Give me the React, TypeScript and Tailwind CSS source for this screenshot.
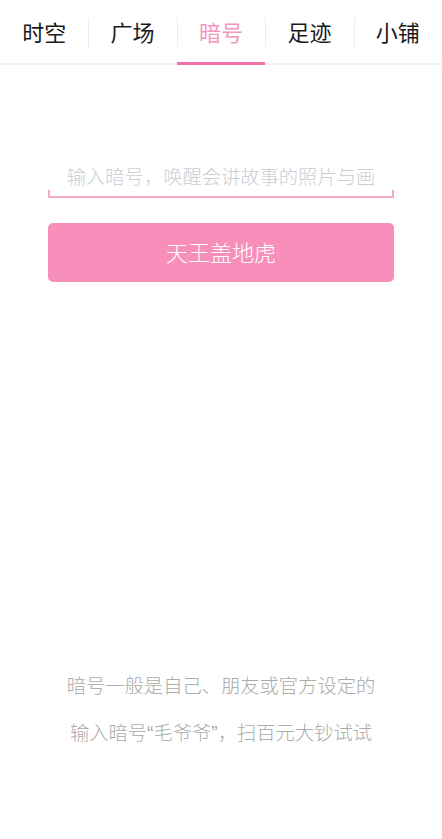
import React from "react";

const tabs = ["时空", "广场", "暗号", "足迹", "小铺"];

export default function App() {
  return (
    <div
      className="w-[442px] h-[839px] bg-white flex flex-col font-light"
      style={{ fontFamily: '"Noto Sans CJK SC", "Noto Sans", sans-serif' }}
    >
      <div className="h-[65px] flex border-b-2 border-[#f2f2f5]">
        {tabs.map((t, i) => (
          <div key={t} className="flex-1 relative flex items-center justify-center">
            {i > 0 && (
              <div className="absolute left-0 top-[18px] h-[29px] w-[1px] bg-[#ececec]" />
            )}
            <span
              className={`text-[22px] leading-none -mt-[2px] font-normal ${
                i === 2 ? "text-[#f597bd]" : "text-[#1a1a1a]"
              }`}
            >
              {t}
            </span>
            {i === 2 && (
              <div className="absolute left-0 right-0 bottom-[-2px] h-[3px] bg-[#f472aa]" />
            )}
          </div>
        ))}
      </div>

      <div className="px-[48px] pt-[92px]">
        <div className="relative h-[41px] border-b-2 border-[#f8a8c9] flex items-center justify-center">
          <div className="absolute left-0 bottom-0 w-[2px] h-[6px] bg-[#f8a8c9]" />
          <div className="absolute right-0 bottom-0 w-[2px] h-[6px] bg-[#f8a8c9]" />
          <span className="text-[19.3px] leading-none text-[#cdcdd2] whitespace-nowrap">
            输入暗号，唤醒会讲故事的照片与画
          </span>
        </div>
        <button className="mt-[25px] w-full h-[59px] rounded-[5px] bg-[#f78fba] text-white text-[22px] flex items-center justify-center pb-[3px]">
          天王盖地虎
        </button>
      </div>

      <div className="mt-[394px] flex flex-col items-center text-[19.3px] text-[#ababab] leading-none">
        <div>暗号一般是自己、朋友或官方设定的</div>
        <div className="mt-[28px]">
          输入暗号<span style={{ fontFamily: '"Liberation Sans", sans-serif' }}>“</span>毛爷爷
          <span style={{ fontFamily: '"Liberation Sans", sans-serif' }}>”</span>，扫百元大钞试试
        </div>
      </div>
    </div>
  );
}
